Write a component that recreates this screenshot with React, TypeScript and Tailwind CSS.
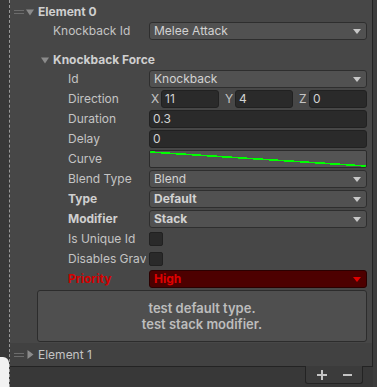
import React from "react";

const FONT: React.CSSProperties = { fontFamily: 'Inter, "Noto Sans", "Liberation Sans", sans-serif' };

function DownArrow({ color = "#c4c4c4" }: { color?: string }) {
  return (
    <svg width="8" height="5" viewBox="0 0 8 5" className="shrink-0">
      <path d="M0 0H8L4 5Z" fill={color} />
    </svg>
  );
}

function Handle() {
  return (
    <div className="flex flex-col gap-[2px] w-[10px] shrink-0">
      <div className="h-px bg-[#6c6c6c]" />
      <div className="h-px bg-[#6c6c6c]" />
    </div>
  );
}

function FoldDown({ color = "#8b8b8b" }: { color?: string }) {
  return (
    <svg width="8" height="7" viewBox="0 0 8 7" className="shrink-0">
      <path d="M0 0.5H8L4 6.5Z" fill={color} />
    </svg>
  );
}

function FoldRight({ color = "#8b8b8b" }: { color?: string }) {
  return (
    <svg width="7" height="9" viewBox="0 0 7 9" className="shrink-0">
      <path d="M0.5 0L6.5 4.5L0.5 9Z" fill={color} />
    </svg>
  );
}

function Dropdown({ value, bold, red }: { value: string; bold?: boolean; red?: boolean }) {
  return (
    <div
      className={`flex-1 h-[18px] rounded-[3px] border flex items-center justify-between pl-[4px] pr-[5px] ${
        red ? "bg-[#4d0000] border-[#2a0000] text-[#e00000]" : "bg-[#515151] border-[#2e2e2e] text-[#d2d2d2]"
      } ${bold ? "font-bold" : ""}`}
    >
      <span className="leading-[16px]">{value}</span>
      <DownArrow color={red ? "#e00000" : "#c8c8c8"} />
    </div>
  );
}

function TextField({ value }: { value: string }) {
  return (
    <div className="flex-1 h-[18px] rounded-[3px] border border-[#212121] bg-[#2a2a2a] pl-[3px] flex items-center text-[#d2d2d2]">
      <span className="leading-[16px]">{value}</span>
    </div>
  );
}

function Checkbox() {
  return <div className="w-[14px] h-[14px] rounded-[2px] border border-[#212121] bg-[#2a2a2a]" />;
}

function Row({
  label,
  level = 2,
  bold,
  red,
  mt = "mt-[2px]",
  children,
}: {
  label: string;
  level?: 1 | 2;
  bold?: boolean;
  red?: boolean;
  mt?: string;
  children: React.ReactNode;
}) {
  return (
    <div className={`flex items-center h-[18px] pr-[5px] ${mt}`}>
      <div
        className={`w-[136px] shrink-0 overflow-hidden whitespace-nowrap leading-[18px] ${
          level === 1 ? "pl-[43px]" : "pl-[58px]"
        } ${red ? "text-[#d40000]" : bold ? "text-[#cfcfcf]" : "text-[#c4c4c4]"} ${bold ? "font-bold" : ""}`}
      >
        {label}
      </div>
      <div className="ml-[3px] flex-1 flex items-center">{children}</div>
    </div>
  );
}

function VecField({ axis, value }: { axis: string; value: string }) {
  return (
    <div className="flex-1 flex items-center">
      <div className="w-[12px] shrink-0 pl-[2px] text-[#c4c4c4] leading-[18px]">{axis}</div>
      <TextField value={value} />
    </div>
  );
}

export default function App() {
  return (
    <div
      className="relative w-[377px] h-[387px] overflow-hidden bg-[#383838] flex text-[12px]"
      style={FONT}
    >
      {/* left strip */}
      <div className="w-[9px] shrink-0 bg-[#383838]" />
      {/* dashed line */}
      <div className="w-px shrink-0 border-l border-dashed border-[#9a9a9a]" />
      {/* main column */}
      <div className="w-[363px] shrink-0 flex flex-col">
        <div className="h-[367px] bg-[#474747] border-r border-b border-[#232323] flex flex-col">
          {/* Element 0 header */}
          <div className="mt-[3px] h-[18px] flex items-center pl-[4px]">
            <Handle />
            <div className="ml-[2px]">
              <FoldDown />
            </div>
            <span className="ml-[4px] font-bold text-[#cfcfcf] leading-[18px]">Element 0</span>
          </div>

          <Row label="Knockback Id" level={1} mt="mt-[1px]">
            <Dropdown value="Melee Attack" />
          </Row>

          {/* Knockback Force */}
          <div className="mt-[11px] h-[18px] flex items-center pl-[31px]">
            <FoldDown />
            <span className="ml-[4px] font-bold text-[#cfcfcf] leading-[18px]">Knockback Force</span>
          </div>

          <Row label="Id" mt="mt-[1px]">
            <Dropdown value="Knockback" />
          </Row>
          <Row label="Direction">
            <div className="flex-1 flex items-center gap-[4px]">
              <VecField axis="X" value="11" />
              <VecField axis="Y" value="4" />
              <VecField axis="Z" value="0" />
            </div>
          </Row>
          <Row label="Duration">
            <TextField value="0.3" />
          </Row>
          <Row label="Delay">
            <TextField value="0" />
          </Row>
          <Row label="Curve">
            <div className="flex-1 h-[18px] rounded-[2px] border border-[#2b2b2b] bg-[#545454] overflow-hidden">
              <svg width="216" height="16" viewBox="0 0 216 16" className="block">
                <line x1="0" y1="1" x2="216" y2="15" stroke="#00ff00" strokeWidth="1.6" shapeRendering="crispEdges" />
              </svg>
            </div>
          </Row>
          <Row label="Blend Type">
            <Dropdown value="Blend" />
          </Row>
          <Row label="Type" bold>
            <Dropdown value="Default" bold />
          </Row>
          <Row label="Modifier" bold>
            <Dropdown value="Stack" bold />
          </Row>
          <Row label="Is Unique Id">
            <Checkbox />
          </Row>
          <Row label="Disables Gravity">
            <Checkbox />
          </Row>
          <Row label="Priority" bold red>
            <Dropdown value="High" bold red />
          </Row>

          {/* help box */}
          <div className="mt-[2px] ml-[27px] mr-[5px] h-[52px] rounded-[3px] border border-[#2c2c2c] bg-[#4f4f4f] flex flex-col items-center justify-center text-[#bdbdbd] font-semibold text-[13px] leading-[16px]">
            <span>test default type.</span>
            <span>test stack modifier.</span>
          </div>

          {/* Element 1 */}
          <div className="mt-[1px] flex-1 bg-[#414141] flex items-center pl-[4px]">
            <Handle />
            <div className="ml-[3px]">
              <FoldRight />
            </div>
            <span className="ml-[4px] text-[#c4c4c4] leading-[18px]">Element 1</span>
          </div>
        </div>

        {/* footer */}
        <div className="flex-1 flex justify-end pr-[10px]">
          <div className="w-[58px] h-[18px] -mt-px rounded-b-[3px] border border-t-0 border-[#232323] bg-[#3b3b3b] flex items-center justify-center gap-[16px] text-[#c4c4c4]">
            <svg width="10" height="10" viewBox="0 0 10 10">
              <path d="M4 0H6V4H10V6H6V10H4V6H0V4H4Z" fill="#c4c4c4" />
            </svg>
            <svg width="9" height="10" viewBox="0 0 9 10">
              <path d="M0 4H9V6H0Z" fill="#c4c4c4" />
            </svg>
          </div>
        </div>
      </div>
      {/* right strip */}
      <div className="flex-1 bg-[#3d3d3d]" />

      {/* white blob bottom-left (overlay artifact) */}
      <div className="absolute left-0 top-[357px] w-[9px] h-[30px] bg-[#f2f2f2] rounded-tr-[6px]" />
    </div>
  );
}
